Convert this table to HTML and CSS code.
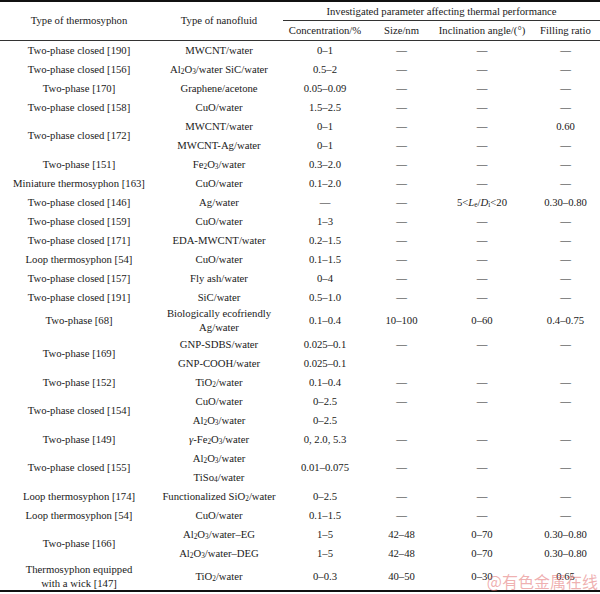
FILE: index.html
```html
<!DOCTYPE html>
<html lang="en">
<head>
<meta charset="utf-8">
<title>Thermosyphon nanofluid table</title>
<link rel="stylesheet" href="styles.css">
</head>
<body>
<div class="page">
<table class="tbl">
  <colgroup>
    <col class="c1"><col class="c2"><col class="c3"><col class="c4"><col class="c5"><col class="c6">
  </colgroup>
  <thead>
    <tr class="h1">
      <th rowspan="2">Type of thermosyphon</th>
      <th rowspan="2">Type of nanofluid</th>
      <th colspan="4" class="span"><div class="spanline">Investigated parameter affecting thermal performance</div></th>
    </tr>
    <tr class="h2">
      <th>Concentration/%</th>
      <th>Size/nm</th>
      <th>Inclination angle/(°)</th>
      <th>Filling ratio</th>
    </tr>
  </thead>
  <tbody>
    <tr><td>Two-phase closed [190]</td><td>MWCNT/water</td><td>0–1</td><td>—</td><td>—</td><td>—</td></tr>
    <tr><td>Two-phase closed [156]</td><td>Al<sub>2</sub>O<sub>3</sub>/water SiC/water</td><td>0.5–2</td><td>—</td><td>—</td><td>—</td></tr>
    <tr><td>Two-phase [170]</td><td>Graphene/acetone</td><td>0.05–0.09</td><td>—</td><td>—</td><td>—</td></tr>
    <tr><td>Two-phase closed [158]</td><td>CuO/water</td><td>1.5–2.5</td><td>—</td><td>—</td><td>—</td></tr>
    <tr><td rowspan="2">Two-phase closed [172]</td><td>MWCNT/water</td><td>0–1</td><td>—</td><td>—</td><td>0.60</td></tr>
    <tr><td>MWCNT-Ag/water</td><td>0–1</td><td>—</td><td>—</td><td>—</td></tr>
    <tr><td>Two-phase [151]</td><td>Fe<sub>2</sub>O<sub>3</sub>/water</td><td>0.3–2.0</td><td>—</td><td>—</td><td>—</td></tr>
    <tr><td>Miniature thermosyphon [163]</td><td>CuO/water</td><td>0.1–2.0</td><td>—</td><td>—</td><td>—</td></tr>
    <tr><td>Two-phase closed [146]</td><td>Ag/water</td><td>—</td><td>—</td><td>5&lt;<i>L</i><sub>e</sub>/<i>D</i><sub>i</sub>&lt;20</td><td>0.30–0.80</td></tr>
    <tr><td>Two-phase closed [159]</td><td>CuO/water</td><td>1–3</td><td>—</td><td>—</td><td>—</td></tr>
    <tr><td>Two-phase closed [171]</td><td>EDA-MWCNT/water</td><td>0.2–1.5</td><td>—</td><td>—</td><td>—</td></tr>
    <tr><td>Loop thermosyphon [54]</td><td>CuO/water</td><td>0.1–1.5</td><td>—</td><td>—</td><td>—</td></tr>
    <tr><td>Two-phase closed [157]</td><td>Fly ash/water</td><td>0–4</td><td>—</td><td>—</td><td>—</td></tr>
    <tr><td>Two-phase closed [191]</td><td>SiC/water</td><td>0.5–1.0</td><td>—</td><td>—</td><td>—</td></tr>
    <tr class="tall"><td>Two-phase [68]</td><td class="two">Biologically ecofriendly<br>Ag/water</td><td>0.1–0.4</td><td>10–100</td><td>0–60</td><td>0.4–0.75</td></tr>
    <tr><td rowspan="2">Two-phase [169]</td><td>GNP-SDBS/water</td><td>0.025–0.1</td><td>—</td><td>—</td><td>—</td></tr>
    <tr><td>GNP-COOH/water</td><td>0.025–0.1</td><td></td><td></td><td></td></tr>
    <tr><td>Two-phase [152]</td><td>TiO<sub>2</sub>/water</td><td>0.1–0.4</td><td>—</td><td>—</td><td>—</td></tr>
    <tr><td rowspan="2">Two-phase closed [154]</td><td>CuO/water</td><td>0–2.5</td><td>—</td><td>—</td><td>—</td></tr>
    <tr><td>Al<sub>2</sub>O<sub>3</sub>/water</td><td>0–2.5</td><td></td><td></td><td></td></tr>
    <tr><td>Two-phase [149]</td><td><i>γ</i>-Fe<sub>2</sub>O<sub>3</sub>/water</td><td>0, 2.0, 5.3</td><td>—</td><td>—</td><td>—</td></tr>
    <tr><td rowspan="2">Two-phase closed [155]</td><td>Al<sub>2</sub>O<sub>3</sub>/water</td><td rowspan="2">0.01–0.075</td><td rowspan="2">—</td><td rowspan="2">—</td><td rowspan="2">—</td></tr>
    <tr><td>TiSo<sub>4</sub>/water</td></tr>
    <tr><td>Loop thermosyphon [174]</td><td>Functionalized SiO<sub>2</sub>/water</td><td>0–2.5</td><td>—</td><td>—</td><td>—</td></tr>
    <tr><td>Loop thermosyphon [54]</td><td>CuO/water</td><td>0.1–1.5</td><td>—</td><td>—</td><td>—</td></tr>
    <tr><td rowspan="2">Two-phase [166]</td><td>Al<sub>2</sub>O<sub>3</sub>/water–EG</td><td>1–5</td><td>42–48</td><td>0–70</td><td>0.30–0.80</td></tr>
    <tr><td>Al<sub>2</sub>O<sub>3</sub>/water–DEG</td><td>1–5</td><td>42–48</td><td>0–70</td><td>0.30–0.80</td></tr>
    <tr class="tall last"><td class="two">Thermosyphon equipped<br>with a wick [147]</td><td>TiO<sub>2</sub>/water</td><td>0–0.3</td><td>40–50</td><td>0–30</td><td>0.65</td></tr>
  </tbody>
</table>
<span class="mark">@有色金属在线</span>
</div>
</body>
</html>
```

FILE: styles.css
```css
html, body {
  margin: 0;
  padding: 0;
  background: #ffffff;
}

.page {
  position: relative;
  width: 600px;
  height: 594px;
  overflow: hidden;
}

.tbl {
  width: 600px;
  table-layout: fixed;
  border-collapse: collapse;
  font-family: "Liberation Serif", "Times New Roman", serif;
  font-size: 10.7px;
  color: #1a1a1a;
  border-top: 2px solid #111;
  border-bottom: 2px solid #111;
}

.c1 { width: 158px; }
.c2 { width: 122px; }
.c3 { width: 90px; }
.c4 { width: 63px; }
.c5 { width: 98px; }
.c6 { width: 69px; }

.tbl th,
.tbl td {
  padding: 0;
  text-align: center;
  vertical-align: middle;
  font-weight: normal;
  white-space: nowrap;
  line-height: 13px;
}

.tbl thead tr.h1 { height: 19px; }
.tbl thead tr.h2 { height: 19px; }

.tbl thead tr.h2 th { border-bottom: 1.5px solid #333; }
.tbl thead tr.h1 th[rowspan] { border-bottom: 1.5px solid #333; }

.tbl th.span {
  padding-left: 3px;
}

.spanline {
  border-bottom: 1px solid #333;
  height: 18px;
  line-height: 19px;
}

.tbl tbody tr { height: 19px; }
.tbl tbody tr.tall { height: 27.5px; }

.tbl tbody td { padding-top: 1px; }

.tbl td.two { line-height: 13.5px; }

.tbl sub {
  font-size: 0.68em;
  line-height: 0;
  vertical-align: -0.15em;
}

.tbl i { font-style: italic; }

.mark {
  position: absolute;
  right: 2px;
  bottom: 4px;
  font-family: "Noto Sans CJK SC", sans-serif;
  font-size: 16px;
  line-height: 17px;
  color: rgba(226, 110, 110, 0.55);
}
```
